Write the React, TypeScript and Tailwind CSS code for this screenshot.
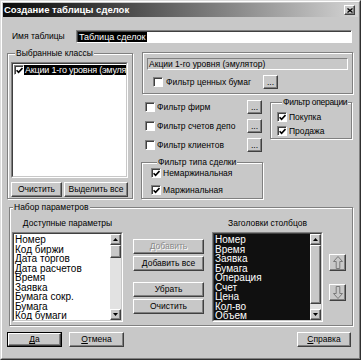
import type { ReactNode } from "react"

const raised =
  "border border-t-white border-l-white border-r-[#404040] border-b-[#404040] bg-[#c8c8c8] shadow-[inset_-1px_-1px_0_#808080]"
const sunkenOuter = "border border-t-[#808080] border-l-[#808080] border-r-white border-b-white"
const sunkenInner = "border border-t-[#404040] border-l-[#404040] border-r-[#c8c8c8] border-b-[#c8c8c8]"

function Btn({
  children,
  className = "",
  disabled,
}: {
  children: ReactNode
  className?: string
  disabled?: boolean
}) {
  return (
    <button
      type="button"
      className={`${raised} flex shrink-0 items-center justify-center text-[8.5px] leading-none ${
        disabled ? "text-[#8a8a8a] [text-shadow:1px_1px_0_#fff]" : "text-black"
      } ${className}`}
    >
      {children}
    </button>
  )
}

function Check({ checked }: { checked?: boolean }) {
  return (
    <span
      className={`${sunkenOuter} flex h-[10px] w-[10px] shrink-0 items-center justify-center bg-white shadow-[inset_1px_1px_0_#404040]`}
    >
      {checked && (
        <svg width="7" height="7" viewBox="0 0 7 7">
          <path d="M0.6 3.2 L2.6 5.4 L6.5 1" stroke="black" strokeWidth="1.6" fill="none" />
        </svg>
      )}
    </span>
  )
}

function CheckRow({ label, checked, gap = "ml-[3px]" }: { label: string; checked?: boolean; gap?: string }) {
  return (
    <div className="flex h-[10px] items-center">
      <Check checked={checked} />
      <span className={`${gap} whitespace-nowrap leading-none`}>{label}</span>
    </div>
  )
}

function Group({
  title,
  className = "",
  legend = "ml-[4px]",
  children,
}: {
  title: string
  className?: string
  legend?: string
  children: ReactNode
}) {
  return (
    <fieldset
      className={`border border-[#808080] shadow-[inset_1px_1px_0_#fff,1px_1px_0_#fff] ${className}`}
    >
      <legend className={`${legend} bg-[#c8c8c8] px-px leading-[10px] whitespace-nowrap`}>{title}</legend>
      {children}
    </fieldset>
  )
}

function ScrollBtn({ down }: { down?: boolean }) {
  return (
    <div className={`${raised} flex h-[11px] w-[11px] shrink-0 items-center justify-center`}>
      <svg width="5" height="3" viewBox="0 0 5 3">
        <path d={down ? "M0 0 H5 L2.5 3 Z" : "M0 3 H5 L2.5 0 Z"} fill="black" />
      </svg>
    </div>
  )
}

function ScrollBar({ thumb }: { thumb: string }) {
  return (
    <div className="flex w-[11px] shrink-0 flex-col bg-[#e2e2e2]">
      <ScrollBtn />
      <div className={`${raised} w-[11px] ${thumb}`} />
      <div className="flex-1" />
      <ScrollBtn down />
    </div>
  )
}

function ListBox({ items, dark, thumb }: { items: string[]; dark?: boolean; thumb: string }) {
  return (
    <div className={`${sunkenOuter} h-[90px] w-[111px]`}>
      <div className={`${sunkenInner} flex h-full`}>
        <div
          className={`flex-1 overflow-hidden pl-px pt-px text-[10px] ${
            dark ? "bg-[#101010] text-white" : "bg-white text-black"
          }`}
        >
          {items.map((t) => (
            <div key={t} className="leading-[9.55px] whitespace-nowrap">
              {t}
            </div>
          ))}
        </div>
        <ScrollBar thumb={thumb} />
      </div>
    </div>
  )
}

function ArrowBtn({ down }: { down?: boolean }) {
  return (
    <div className={`${raised} flex h-[17px] w-[17px] items-center justify-center`}>
      <svg width="10" height="13" viewBox="0 0 10 13" className={down ? "rotate-180" : ""}>
        <path
          d="M5 0.5 L9.5 5.5 L6.8 5.5 L6.8 12.5 L3.2 12.5 L3.2 5.5 L0.5 5.5 Z"
          stroke="#7a7a7a"
          strokeWidth="1"
          fill="none"
        />
      </svg>
    </div>
  )
}

const available = [
  "Номер",
  "Код биржи",
  "Дата торгов",
  "Дата расчетов",
  "Время",
  "Заявка",
  "Бумага сокр.",
  "Бумага",
  "Код бумаги",
  "Цена",
]

const chosen = ["Номер", "Время", "Заявка", "Бумага", "Операция", "Счет", "Цена", "Кол-во", "Объем", "Сумма"]

export default function App() {
  return (
    <div className="h-[360px] w-[361px] overflow-hidden border border-t-[#dcdcdc] border-r-[#303030] border-b-[#303030] border-l-[#dcdcdc] bg-[#c8c8c8] font-['Liberation_Sans',Arial,sans-serif] text-[8.5px] text-black">
      <div className="flex h-full flex-col border border-t-white border-r-[#808080] border-b-[#808080] border-l-white p-px">
        {/* title bar */}
        <div className="flex h-[14px] shrink-0 items-center justify-between bg-linear-to-r from-[#0c0c0c] via-[#6a6a6a] to-[#d4d4d4] pr-[3px] pl-px">
          <span className="text-[9.5px] leading-none font-bold text-white">Создание таблицы сделок</span>
          <div className={`${raised} flex h-[10px] w-[11px] items-center justify-center`}>
            <svg width="6" height="5" viewBox="0 0 6 5">
              <path d="M0.5 0.5 L5.5 4.5 M5.5 0.5 L0.5 4.5" stroke="black" strokeWidth="1.3" />
            </svg>
          </div>
        </div>

        {/* table name */}
        <div className="mt-[13px] mr-[6px] flex h-[13px] items-center">
          <span className="ml-[9px] w-[64px] leading-none">Имя таблицы</span>
          <div
            className={`${sunkenOuter} flex h-[13px] flex-1 items-center bg-white pl-px shadow-[inset_1px_1px_0_#404040]`}
          >
            <span className="bg-black px-px text-[9px] leading-[10px] text-white">Таблица сделок</span>
          </div>
        </div>

        {/* classes + filters */}
        <div className="mt-[5px] ml-[4px] flex items-start">
          <Group title="Выбранные классы" className="w-[126px] pr-[4px] pb-px pl-[3px]">
            <div className={`${sunkenOuter} mt-[4px] h-[116px] w-[117px]`}>
              <div className={`${sunkenInner} h-full bg-white pt-px pl-px`}>
                <div className="flex h-[10px] items-center">
                  <Check checked />
                  <span className="flex-1 overflow-hidden bg-black pl-px text-[9px] leading-[10px] tracking-[-0.2px] whitespace-nowrap text-white">
                    Акции 1-го уровня (эмулятор)
                  </span>
                </div>
              </div>
            </div>
            <div className="mt-[4px] flex gap-[2px]">
              <Btn className="h-[15px] w-[51px]">Очистить</Btn>
              <Btn className="h-[15px] w-[64px]">Выделить все</Btn>
            </div>
          </Group>

          <div className="ml-[8px] w-[212px]">
            <div className="mt-[4px] ml-px w-[211px] border border-[#808080] px-[4px] pt-[5px] pb-[4px] shadow-[inset_1px_1px_0_#fff,1px_1px_0_#fff]">
              <div className="flex h-[12px] items-center border border-t-[#808080] border-r-white border-b-white border-l-[#808080] pl-px leading-none">
                Акции 1-го уровня (эмулятор)
              </div>
              <div className="mt-[5px] flex h-[14px] items-center pl-[6px]">
                <Check />
                <span className="ml-[3px] w-[97px] leading-none whitespace-nowrap">Фильтр ценных бумаг</span>
                <Btn className="h-[14px] w-[15px]">...</Btn>
              </div>
            </div>

            <div className="flex items-start">
              <div className="w-[122px]">
                <div className="mt-[6px] flex flex-col gap-[5px]">
                  {["Фильтр фирм", "Фильтр счетов депо", "Фильтр клиентов"].map((t) => (
                    <div key={t} className="flex h-[14px] items-center pl-[4px]">
                      <Check />
                      <span className="ml-[2px] w-[90px] leading-none whitespace-nowrap">{t}</span>
                      <Btn className="h-[14px] w-[15px]">...</Btn>
                    </div>
                  ))}
                </div>
                <Group
                  title="Фильтр типа сделки"
                  legend="ml-[6px]"
                  className="mt-[5px] w-[122px] pt-px pb-[3px] pl-[9px]"
                >
                  <div className="flex flex-col gap-[7px]">
                    <CheckRow label="Немаржинальная" checked gap="ml-[2px]" />
                    <CheckRow label="Маржинальная" checked gap="ml-[2px]" />
                  </div>
                </Group>
              </div>

              <Group
                title="Фильтр операции"
                legend="ml-[5px] tracking-[-0.3px]"
                className="mt-[3px] ml-[7px] w-[82px] pt-[5px] pb-[2px] pl-[6px]"
              >
                <div className="flex flex-col gap-[4px]">
                  <CheckRow label="Покупка" checked gap="ml-[2px]" />
                  <CheckRow label="Продажа" checked gap="ml-[2px]" />
                </div>
              </Group>
            </div>
          </div>
        </div>

        {/* parameter set */}
        <Group title="Набор параметров" legend="ml-[3px]" className="mt-[3px] ml-[6px] w-[344px] pb-[3px]">
          <div className="flex items-start">
            <div className="ml-[2px] w-[111px]">
              <div className="mt-[5px] h-[12px] text-center leading-[12px]">Доступные параметры</div>
              <div className="mt-[3px]">
                <ListBox items={available} thumb="h-[13px]" />
              </div>
            </div>

            <div className="mt-[27px] ml-[10px] flex w-[71px] flex-col">
              <Btn className="h-[15px] w-[71px]" disabled>
                Добавить
              </Btn>
              <Btn className="mt-[2px] h-[15px] w-[71px]">Добавить все</Btn>
              <Btn className="mt-[11px] h-[15px] w-[71px]">Убрать</Btn>
              <Btn className="mt-[2px] h-[15px] w-[71px]">Очистить</Btn>
            </div>

            <div className="ml-[8px] w-[111px]">
              <div className="mt-[5px] h-[12px] text-center leading-[12px]">Заголовки столбцов</div>
              <div className="mt-[3px]">
                <ListBox items={chosen} dark thumb="h-[59px]" />
              </div>
            </div>

            <div className="mt-[42px] ml-[6px] flex flex-col gap-[13px]">
              <ArrowBtn />
              <ArrowBtn down />
            </div>
          </div>
        </Group>

        {/* dialog buttons */}
        <div className="mt-[6px] ml-[4px] flex items-center">
          <div className="border border-black">
            <Btn className="h-[13px] w-[53px]">
              <span className="underline">Д</span>а
            </Btn>
          </div>
          <Btn className="ml-[7px] h-[15px] w-[55px]">
            <span className="underline">О</span>тмена
          </Btn>
          <Btn className="mr-[7px] ml-auto h-[15px] w-[54px]">
            <span className="underline">С</span>правка
          </Btn>
        </div>
      </div>
    </div>
  )
}
